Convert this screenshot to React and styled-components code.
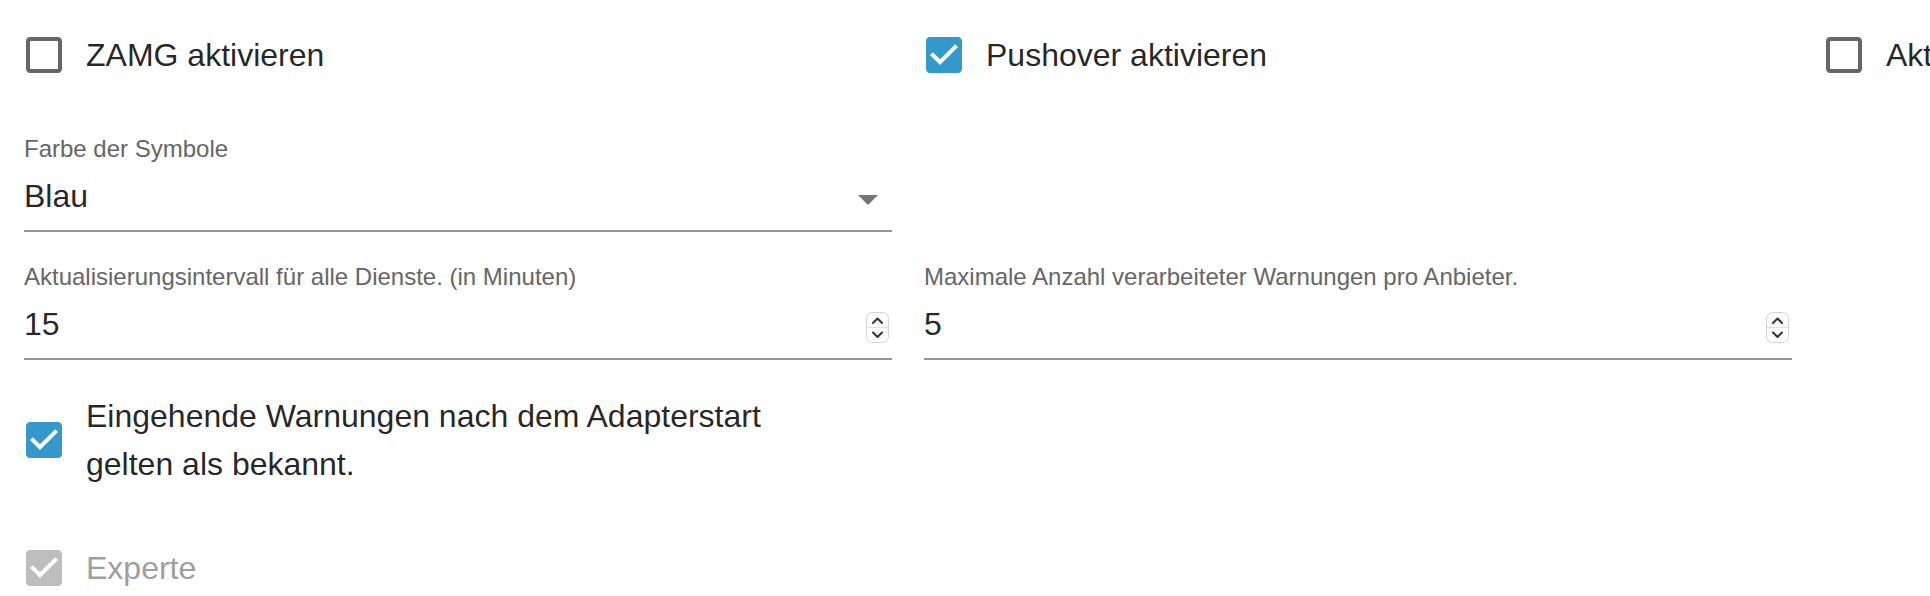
import React from 'react';
import styled, { createGlobalStyle } from 'styled-components';

const GlobalStyle = createGlobalStyle`
  html, body {
    margin: 0;
    padding: 0;
    background: #fff;
    overflow: hidden;
  }
  body {
    font-family: "Liberation Sans", Arial, Helvetica, sans-serif;
    color: rgba(0, 0, 0, 0.87);
  }
`;

const Page = styled.div`
  width: 1930px;
  height: 596px;
  padding: 13px 0 0 24px;
  box-sizing: border-box;
  overflow: hidden;
`;

const Row = styled.div`
  display: grid;
  grid-template-columns: repeat(3, 868px);
  column-gap: 32px;
  margin-top: ${p => p.$top || 0}px;
`;

const CheckLabel = styled.label`
  display: flex;
  align-items: center;
  margin: 0 32px 0 -22px;
  cursor: ${p => (p.$disabled ? 'default' : 'pointer')};
`;

const CheckRoot = styled.span`
  display: inline-flex;
  flex-shrink: 0;
  padding: 18px;
  color: ${p => (p.$disabled ? '#bdbdbd' : p.$checked ? '#3399cc' : '#666666')};

  svg {
    display: block;
    width: 48px;
    height: 48px;
    fill: currentColor;
  }
`;

const LabelText = styled.span`
  font-size: 32px;
  line-height: 48px;
  max-width: ${p => p.$maxWidth || 'none'};
  color: ${p => (p.$disabled ? '#9e9e9e' : 'rgba(0, 0, 0, 0.87)')};
`;

const Field = styled.div`
  display: flex;
  flex-direction: column;
`;

const FieldLabel = styled.div`
  font-size: 24px;
  line-height: 32px;
  color: #666666;
  white-space: nowrap;
`;

const InputRow = styled.div`
  display: flex;
  align-items: center;
  height: 46px;
  padding: 8px 0 11px;
  border-bottom: 2px solid #949494;
`;

const Value = styled.div`
  flex: 1;
  font-size: 32px;
  line-height: 46px;
  color: rgba(0, 0, 0, 0.87);
`;

const NumberInput = styled.input`
  flex: 1;
  min-width: 0;
  height: 46px;
  padding: 0;
  border: none;
  outline: none;
  background: transparent;
  font-family: inherit;
  font-size: 32px;
  color: rgba(0, 0, 0, 0.87);
`;

const ArrowIcon = styled.svg`
  width: 48px;
  height: 48px;
  margin: 2px 0 -4px;
  fill: #757575;
  flex-shrink: 0;
`;

const Spinner = styled.svg`
  width: 23px;
  height: 31px;
  margin: 7px 3px 0 0;
  flex-shrink: 0;
`;

const BLANK = 'M19 5v14H5V5h14m0-2H5c-1.11 0-2 .9-2 2v14c0 1.1.89 2 2 2h14c1.1 0 2-.9 2-2V5c0-1.1-.9-2-2-2z';
const CHECKED = 'M19 3H5c-1.11 0-2 .9-2 2v14c0 1.1.89 2 2 2h14c1.11 0 2-.9 2-2V5c0-1.1-.89-2-2-2zm-9 14l-5-5 1.41-1.41L10 14.17l7.59-7.59L19 8l-9 9z';

const Check = ({ checked, disabled, maxWidth, children }) => (
  <CheckLabel $disabled={disabled}>
    <CheckRoot $checked={checked} $disabled={disabled}>
      <svg viewBox="0 0 24 24">
        <path d={checked ? CHECKED : BLANK} />
      </svg>
    </CheckRoot>
    <LabelText $disabled={disabled} $maxWidth={maxWidth}>{children}</LabelText>
  </CheckLabel>
);

const NumberField = ({ label, value }) => (
  <Field>
    <FieldLabel>{label}</FieldLabel>
    <InputRow>
      <NumberInput type="text" defaultValue={value} readOnly />
      <Spinner viewBox="0 0 23 31">
        <rect x="0.5" y="0.5" width="22" height="30" rx="6" fill="#fdfdfd" stroke="#d4d4d4" />
        <line x1="1" y1="15.5" x2="22" y2="15.5" stroke="#e2e2e2" />
        <path d="M7 11 L11.5 6.5 L16 11" fill="none" stroke="#333" strokeWidth="2" strokeLinecap="round" strokeLinejoin="round" />
        <path d="M7 20.5 L11.5 25 L16 20.5" fill="none" stroke="#333" strokeWidth="2" strokeLinecap="round" strokeLinejoin="round" />
      </Spinner>
    </InputRow>
  </Field>
);

const App = () => {
  return (
    <>
      <GlobalStyle />
      <Page>
        <Row>
          <Check>ZAMG aktivieren</Check>
          <Check checked>Pushover aktivieren</Check>
          <Check>Aktivieren</Check>
        </Row>

        <Row $top={36}>
          <Field>
            <FieldLabel>Farbe der Symbole</FieldLabel>
            <InputRow>
              <Value>Blau</Value>
              <ArrowIcon viewBox="0 0 24 24">
                <path d="M7 10l5 5 5-5z" />
              </ArrowIcon>
            </InputRow>
          </Field>
        </Row>

        <Row $top={29}>
          <NumberField label="Aktualisierungsintervall für alle Dienste. (in Minuten)" value="15" />
          <NumberField label="Maximale Anzahl verarbeiteter Warnungen pro Anbieter." value="5" />
        </Row>

        <Row $top={32}>
          <Check checked maxWidth="740px">Eingehende Warnungen nach dem Adapterstart gelten als bekannt.</Check>
        </Row>

        <Row $top={38}>
          <Check checked disabled>Experte</Check>
        </Row>
      </Page>
    </>
  );
};

export default App;
